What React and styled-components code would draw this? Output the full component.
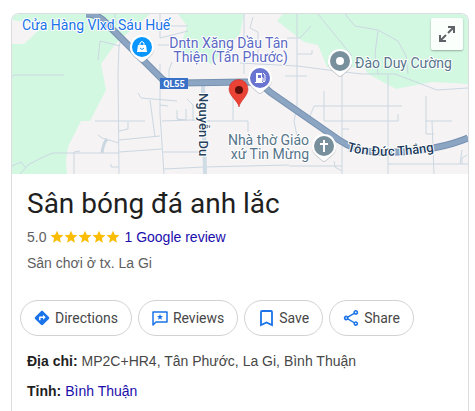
import * as React from 'react';
import styled, { createGlobalStyle } from 'styled-components';
import { MdDirections, MdOutlineShare, MdStar } from 'react-icons/md';

const GlobalStyle = createGlobalStyle`
    body {
        margin: 0;
        background: #fff;
        color: #474747;
        font: 14px/20px "Liberation Sans", Arial, sans-serif;
    }
`;

const Panel = styled.article`
    box-sizing: border-box;
    min-height: calc(100vh - 13px);
    margin: 13px 6px 0 11px;
    border: 1px solid #dadce0;
    border-bottom: 0;
    border-radius: 8px 8px 0 0;
    overflow: hidden;
`;

const MapFrame = styled.div`
    position: relative;
    height: 160px;
`;

const MapDrawing = styled.svg`
    display: block;
    width: 100%;
    height: 100%;
    background: #f5f3f4;
`;

const ExpandButton = styled.button`
    position: absolute;
    top: 4px;
    right: 5px;
    display: grid;
    place-items: center;
    width: 32px;
    height: 32px;
    padding: 0;
    border: 0;
    border-radius: 2px;
    background: rgba(255, 255, 255, 0.9);
    box-shadow: 0 1px 2px rgba(0, 0, 0, 0.3);
    color: #5f6368;
    cursor: pointer;
`;

const Label = styled.text`
    fill: ${p => p.$color};
    stroke: #fff;
    stroke-width: 2px;
    stroke-linejoin: round;
    paint-order: stroke;
    font-family: Roboto, sans-serif;
    font-size: ${p => p.$size || 14}px;
    font-weight: ${p => p.$weight || 400};
    text-anchor: ${p => p.$anchor || 'start'};
`;

const Badge = styled.text`
    fill: #fff;
    font: 700 9px Roboto, sans-serif;
    text-anchor: middle;
`;

const Summary = styled.header`
    padding: 10px 15px 0;
`;

const Title = styled.h1`
    margin: 0;
    color: #1f1f1f;
    font: 400 28px/40px Roboto, sans-serif;
`;

const Rating = styled.div`
    display: flex;
    align-items: center;
    gap: 4px;
    margin-top: 3px;
    color: #5e5e5e;
`;

const Stars = styled.span`
    display: flex;
    color: #fbbc04;
`;

const Link = styled.a`
    color: #1a0dab;
    text-decoration: none;
`;

const Category = styled.p`
    margin: 6px 0 0;
    color: #5e5e5e;
`;

const Actions = styled.div`
    display: flex;
    flex-wrap: wrap;
    gap: 6px;
    padding: 27px 8px 0;
`;

const Action = styled.button`
    display: flex;
    align-items: center;
    gap: 5px;
    height: 36px;
    padding: 0 13px;
    border: 1px solid #d2d2d2;
    border-radius: 18px;
    background: #fff;
    color: #474747;
    font: 400 14px/20px Roboto, sans-serif;
    cursor: pointer;

    svg {
        color: #1a73e8;
    }
`;

const Facts = styled.dl`
    display: grid;
    gap: 10px;
    margin: 0;
    padding: 15px 15px 10px;
`;

const Fact = styled.div`
    display: flex;
    gap: 4px;

    dt {
        color: #1f1f1f;
        font-weight: 700;
    }

    dd {
        margin: 0;
    }
`;

const PARKS = [
    'M0 0H138L104 29L89 50L94 76L78 107H69L56 133L54 146L55 160H0V30H12L27 16L14 8L0 6Z',
    'M166 0H232L228 20L218 30L200 50L178 43L168 34L175 12Z',
    'M271 0H456V70L420 68L384 75L356 60L352 53L315 53L306 31L292 28L265 7Z',
];

const STREETS = [
    'M0 63L2 61H52M86 46L88 27L108 32M103 10V0M110 24L107 32L106 60L107 160',
    'M126 79L129 84L165 87M138 86L143 123M83 107H133M107 117L116 115V108M107 126L148 122',
    'M148 0V24M146 31H157M148 50V100L152 160M174 95V106L165 105M175 85L181 91V107M148 91L156 92',
    'M160 48L157 56V64M150 107L180 106L198 107M150 138H188M152 155L192 153L277 151',
    'M107 138L150 135M107 139H41L29 144L16 151L8 160M0 152L9 148L14 154M86 121L90 124L107 129',
    'M62 160V138L68 137M99 150V153H107M165 96V105L170 106M148 24L176 17M157 12H176',
    'M221 74V106M196 107H236V118M228 49L285 52L316 56L350 60H383L425 76L456 74',
    'M232 0V60M241 3L238 14L246 18V42M285 0V92L282 107L285 122M275 24H288L299 12M285 40H300V36',
    'M273 62H295M306 0L314 10L332 32L340 42M333 0L343 12L366 16L386 27L394 42L396 60M366 16L363 40L366 60',
    'M330 60V160M376 60V160M296 107L302 92H390M312 77V107H386V100M414 82V107M413 107H440',
    'M420 107L422 160M414 107V120H422M330 115H337M376 150H456M450 136L448 150M277 152H330',
    'M322 147L323 153L330 157M336 138L344 129M455 141L450 144V150',
];

const HIGHWAY = 'M74 0Q86 0 94 9L150 65Q155 69 168 69L234 68Q248 68 258 78L327 126Q343 137 362 138L390 138Q430 135 456 124';

const Pin = ({ x, y, color, children }) => (
    <g transform={`translate(${x} ${y})`}>
        <path d="M0-12A12 12 0 0 1 8 9L2 14Q0 16-2 14L-8 9A12 12 0 0 1 0-12Z" fill="#8b9299" opacity=".45" transform="translate(0 1)" />
        <path d="M0-12A12 12 0 0 1 8 9L2 14Q0 16-2 14L-8 9A12 12 0 0 1 0-12Z" fill="#fff" />
        <circle r="10" fill={color} />
        {children}
    </g>
);

const PlaceMap = () => (
    <MapFrame>
        <MapDrawing viewBox="0 0 456 160" preserveAspectRatio="xMidYMid slice" role="img" aria-label="Map">
            <g fill="#d3f8e2">
                {PARKS.map(d => <path key={d} d={d} />)}
            </g>
            <g fill="none" stroke="#cbd7e1" strokeWidth="1">
                {STREETS.map(d => <path key={d} d={d} />)}
                <path d="M191 70L193 160" stroke="#d0dce4" strokeWidth="4" />
                <path d="M95 125Q91 130 90 139" strokeWidth="3" />
                <path d={HIGHWAY} stroke="#7590b0" strokeWidth="7" />
                <path d={HIGHWAY} stroke="#8ba5c2" strokeWidth="5" />
            </g>

            <rect x="148" y="64" width="28" height="11" fill="#3970c8" />
            <Badge x="162" y="73">QL55</Badge>

            <Label x="10" y="16" $color="#1a73e8">Cửa Hàng Vlxd Sáu Huế</Label>
            <Label y="34" $color="#5c69c4" $anchor="end">
                <tspan x="276">Dntn Xăng Dầu Tân</tspan>
                <tspan x="276" dy="14">Thiện (Tân Phước)</tspan>
            </Label>
            <Label x="343" y="54" $color="#56758a">Đào Duy Cường</Label>
            <Label y="131" $color="#56758a" $anchor="end">
                <tspan x="297">Nhà thờ Giáo</tspan>
                <tspan x="297" dy="14">xứ Tin Mừng</tspan>
            </Label>
            <Label transform="translate(187 79) rotate(90)" $color="#27415a" $size={13} $weight={500}>Nguyễn Du</Label>
            <path id="street-curve" d="M335 137Q370 147 430 136" fill="none" />
            <Label $color="#203a5c" $size={13} $weight={500}>
                <textPath href="#street-curve">Tôn Đức Thắng</textPath>
            </Label>

            <Pin x={130} y={33} color="#0a96ff">
                <path d="M-4-2H4L5 5H-5Z" fill="#fff" />
                <path d="M-2-2V-4Q0-7 2-4V-2" fill="none" stroke="#fff" />
                <path d="M-2 1Q0 4 2 1" fill="none" stroke="#0a96ff" />
            </Pin>
            <Pin x={248} y={64} color="#6a75d1">
                <path d="M-4-5H2V4H3V5H-5V4H-4Z" fill="#fff" />
                <rect x="-2" y="-3" width="3" height="3" fill="#6a75d1" />
                <path d="M2 0H3V3Q4 5 5 3V-3L3-5" fill="none" stroke="#fff" />
            </Pin>
            <Pin x={328} y={47} color="#78909c">
                <circle r="4" fill="#fff" />
            </Pin>
            <Pin x={312} y={132} color="#78909c">
                <path d="M0-6V6M-4-2H4" stroke="#fff" strokeWidth="2" />
            </Pin>

            <path d="M227 93C226 87 217 82 217 75A9 9 0 0 1 236 75C236 82 228 87 227 93Z" fill="#ea4335" stroke="#c5221f" strokeWidth=".5" />
            <circle cx="227" cy="76" r="4" fill="#5f0f0b" />
        </MapDrawing>
        <ExpandButton aria-label="Expand map">
            <svg width="18" height="18" viewBox="0 0 18 18" fill="none" stroke="currentColor" strokeWidth="2">
                <path d="M10 2H16V8M16 2L10 8M2 10V16H8M2 16L8 10" />
            </svg>
        </ExpandButton>
    </MapFrame>
);

const ReviewIcon = () => (
    <svg width="16" height="16" viewBox="0 0 16 16" fill="none">
        <path d="M1 15V2H15V12H4Z" stroke="currentColor" strokeWidth="1.5" strokeLinejoin="round" />
        <path d="M8 3.8L8.8 6H11L9.3 7.4L10 9.8L8 8.4L6 9.8L6.7 7.4L5 6H7.2Z" fill="currentColor" />
    </svg>
);

const SaveIcon = () => (
    <svg width="16" height="18" viewBox="0 0 16 18" fill="none">
        <path d="M3 16V3Q3 2 4 2H13Q14 2 14 3V16L8.5 13.5Z" stroke="currentColor" strokeWidth="1.8" />
    </svg>
);

const App = () => {
    return (
        <>
            <GlobalStyle />
            <Panel>
                <PlaceMap />
                <Summary>
                    <Title>Sân bóng đá anh lắc</Title>
                    <Rating>
                        <span>5.0</span>
                        <Stars role="img" aria-label="5 stars">
                            {[1, 2, 3, 4, 5].map(n => <MdStar key={n} size={14} viewBox="1 1 22 22" />)}
                        </Stars>
                        <Link href="#reviews">1 Google review</Link>
                    </Rating>
                    <Category>Sân chơi ở tx. La Gi</Category>
                </Summary>
                <Actions>
                    <Action><MdDirections size={16} viewBox="1 1 22 22" />Directions</Action>
                    <Action><ReviewIcon />Reviews</Action>
                    <Action><SaveIcon />Save</Action>
                    <Action><MdOutlineShare size={16} viewBox="2 2 20 20" />Share</Action>
                </Actions>
                <Facts>
                    <Fact>
                        <dt>Địa chỉ:</dt>
                        <dd>MP2C+HR4, Tân Phước, La Gi, Bình Thuận</dd>
                    </Fact>
                    <Fact>
                        <dt>Tỉnh:</dt>
                        <dd><Link href="#binh-thuan">Bình Thuận</Link></dd>
                    </Fact>
                </Facts>
            </Panel>
        </>
    );
}


export default App;
